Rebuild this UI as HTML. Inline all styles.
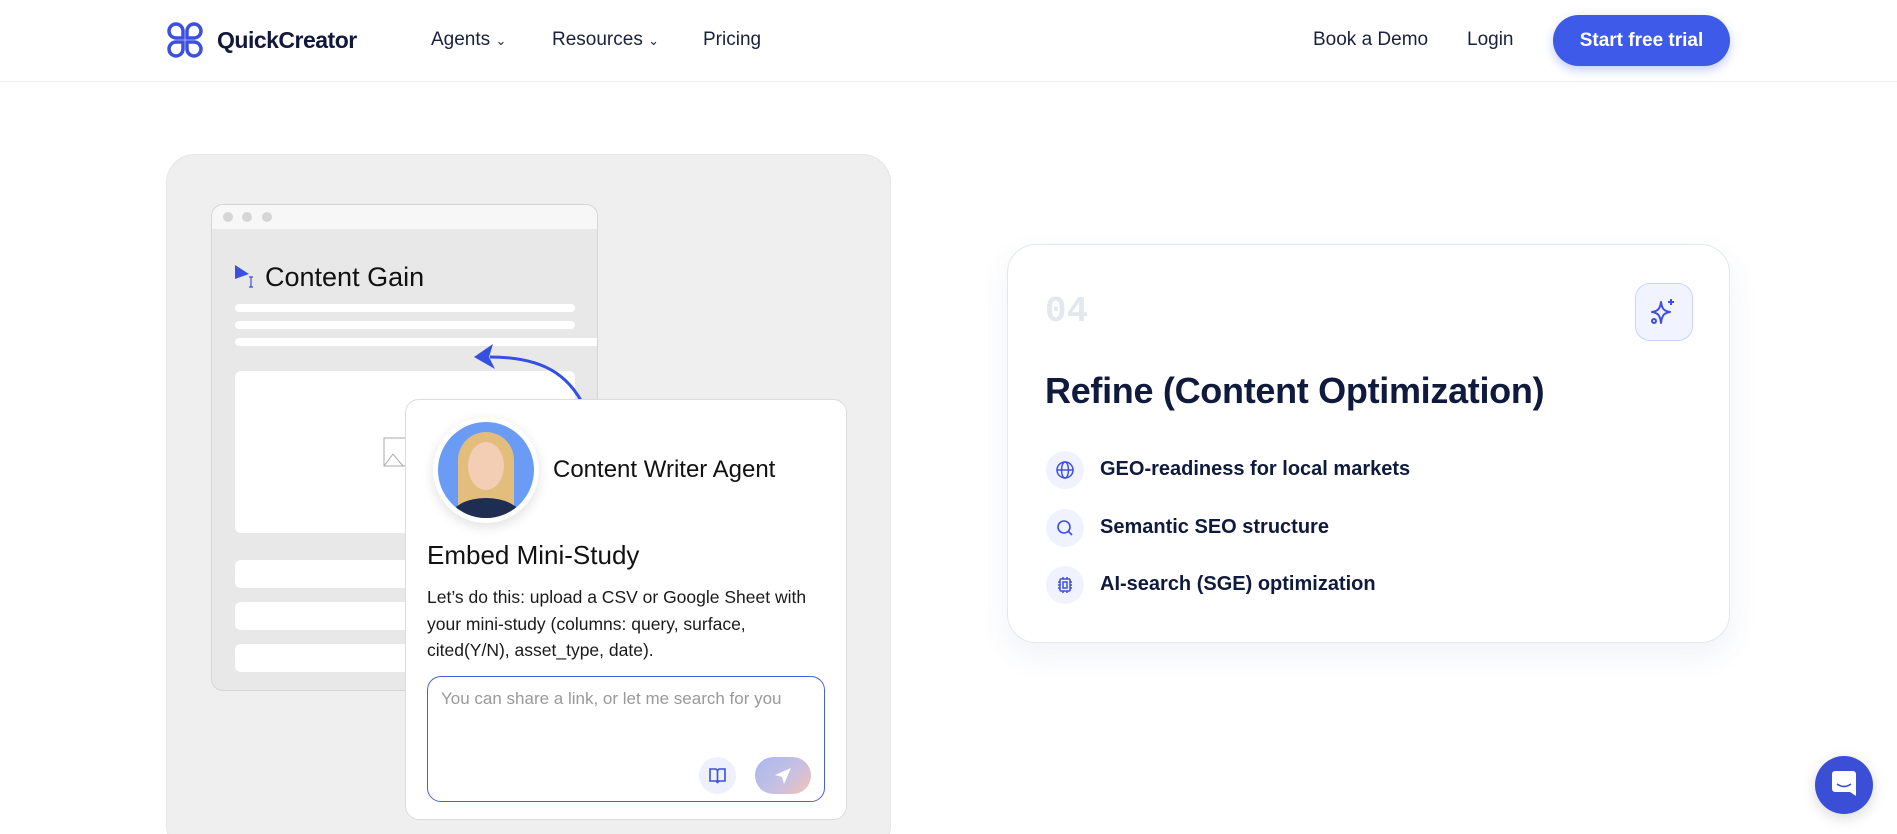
<!DOCTYPE html>
<html><head><meta charset="utf-8"><style>
*{margin:0;padding:0;box-sizing:border-box}
html,body{width:1897px;height:834px;overflow:hidden}
body{background:#fff;font-family:"Liberation Sans",sans-serif;color:#0f1a3d;position:relative}
.abs{position:absolute}
.hdr{left:0;top:0;width:1897px;height:82px;border-bottom:1px solid #f0f0f2;background:#fff}
.nav{font-size:19px;color:#1a2040;top:29px}
.btn{left:1553px;top:15px;width:177px;height:51px;border-radius:26px;background:#3d5ae8;color:#fff;font-weight:bold;font-size:19px;text-align:center;line-height:51px;box-shadow:0 4px 10px rgba(61,90,232,.3)}
.panel{left:166px;top:154px;width:725px;height:700px;background:#efefef;border-radius:29px;border:1px solid #e6e6e6}
.win{left:211px;top:204px;width:387px;height:487px;background:#e8e8e8;border:1px solid #d6d6d6;border-radius:12px;overflow:hidden}
.bar{left:0;top:0;width:100%;height:24px;background:#f7f7f7}
.dot{width:10px;height:10px;border-radius:50%;background:#d6d6d6;top:7px}
.ln{background:#fff;height:8px;border-radius:4px}
.card{left:405px;top:399px;width:442px;height:421px;background:#fff;border:1px solid #dcdcdc;border-radius:14px}
.rc{left:1007px;top:244px;width:723px;height:399px;background:#fff;border:1px solid #e5e7eb;border-radius:29px;box-shadow:0 12px 30px rgba(70,90,160,.08)}
.li{font-size:20px;font-weight:bold;color:#0f1a3d}
.ic{width:38px;height:38px;border-radius:50%;background:#f0f3fd}
</style></head><body>
<div class="abs hdr"></div>
<svg class="abs" style="left:166px;top:21px" width="38" height="38" viewBox="0 0 38 38" fill="none" stroke="#3d4fe0" stroke-width="3.5">
<path d="M17 17H10A7 7 0 1 1 17 10Z"/><path d="M21 17h7A7 7 0 1 0 21 10Z"/><path d="M17 21H10A7 7 0 1 0 17 28Z"/><path d="M21 21h7A7 7 0 1 1 21 28Z"/></svg>
<div class="abs" style="left:217px;top:27px;font-size:23px;font-weight:bold;color:#11183a;letter-spacing:-0.5px">QuickCreator</div>
<div class="abs nav" style="left:431px">Agents <span style="font-size:13px">&#8964;</span></div>
<div class="abs nav" style="left:552px">Resources <span style="font-size:13px">&#8964;</span></div>
<div class="abs nav" style="left:703px">Pricing</div>
<div class="abs nav" style="left:1313px">Book a Demo</div>
<div class="abs nav" style="left:1467px">Login</div>
<div class="abs btn">Start free trial</div>

<div class="abs panel"></div>
<div class="abs win">
 <div class="abs bar"></div>
 <div class="abs dot" style="left:11px"></div><div class="abs dot" style="left:30px"></div><div class="abs dot" style="left:50px"></div>
 <svg class="abs" style="left:23px;top:60px" width="22" height="24"><path d="M0 0L14 9L0 14Z" fill="#3d4fe0"/><path d="M16 12v10M14 12h4M14 22h4" stroke="#3d4fe0" stroke-width="1.2"/></svg>
 <div class="abs" style="left:53px;top:57px;font-size:27px;color:#111">Content Gain</div>
 <div class="abs ln" style="left:23px;top:99px;width:340px"></div>
 <div class="abs ln" style="left:23px;top:116px;width:340px"></div>
 <div class="abs ln" style="left:23px;top:133px;width:370px"></div>
 <div class="abs" style="left:23px;top:166px;width:340px;height:162px;background:#fff;border-radius:6px"></div>
 <svg class="abs" style="left:171px;top:232px" width="24" height="30"><rect x="1" y="1" width="22" height="28" fill="none" stroke="#aaa"/><path d="M1 29L10 17L20 29" fill="none" stroke="#aaa"/></svg>
 <div class="abs" style="left:23px;top:355px;width:340px;height:28px;background:#fff;border-radius:6px"></div>
 <div class="abs" style="left:23px;top:397px;width:340px;height:28px;background:#fff;border-radius:6px"></div>
 <div class="abs" style="left:23px;top:439px;width:340px;height:28px;background:#fff;border-radius:6px"></div>
</div>
<svg class="abs" style="left:460px;top:335px" width="140" height="80" fill="none"><path d="M127 77C112 45 90 22 30 22" stroke="#3550e0" stroke-width="3"/><path d="M14 22L33 9L29 22L35 34Z" fill="#3550e0"/></svg>

<div class="abs card">
 <div class="abs" style="left:27px;top:17px;width:106px;height:106px;border-radius:50%;background:#fff;box-shadow:0 4px 12px rgba(0,0,0,.12)"></div>
 <div class="abs" style="left:32px;top:22px;width:96px;height:96px;border-radius:50%;background:#6a9bf5;overflow:hidden">
  <div class="abs" style="left:20px;top:10px;width:56px;height:84px;border-radius:28px 28px 10px 10px;background:#e2bd7c"></div>
  <div class="abs" style="left:30px;top:20px;width:36px;height:48px;border-radius:50%;background:#f3cdb4"></div>
  <div class="abs" style="left:12px;top:76px;width:72px;height:40px;border-radius:50% 50% 0 0;background:#1f2d52"></div>
 </div>
 <div class="abs" style="left:147px;top:56px;font-size:24px;color:#111">Content Writer Agent</div>
 <div class="abs" style="left:21px;top:140px;font-size:26px;color:#111">Embed Mini-Study</div>
 <div class="abs" style="left:21px;top:184px;font-size:17.5px;line-height:26.5px;color:#1a1a1a;width:400px">Let’s do this: upload a CSV or Google Sheet with your mini-study (columns: query, surface, cited(Y/N), asset_type, date).</div>
 <div class="abs" style="left:21px;top:276px;width:398px;height:126px;border:1.5px solid #4a5fe0;border-radius:14px">
  <div class="abs" style="left:13px;top:12px;font-size:17px;color:#999">You can share a link, or let me search for you</div>
  <div class="abs" style="left:271px;top:80px;width:37px;height:37px;border-radius:50%;background:#eef1fb"></div>
  <svg class="abs" style="left:281px;top:90px" width="17" height="17" fill="none" stroke="#3d4fe0" stroke-width="1.6"><path d="M1 2h6l1.5 1.5L10 2h6v12h-6l-1.5 1.5L7 14H1Z M8.5 3.5v12"/></svg>
  <div class="abs" style="left:327px;top:80px;width:56px;height:37px;border-radius:19px;background:linear-gradient(135deg,#a9b8f0,#c9c0e0 60%,#f6c2b0)"></div>
  <svg class="abs" style="left:345px;top:89px" width="20" height="20"><path d="M18 2L2 9l7 2 2 7Z" fill="#fff"/></svg>
 </div>
</div>

<div class="abs rc">
 <div class="abs" style="left:37px;top:46px;font-family:'Liberation Mono',monospace;font-weight:bold;font-size:36px;color:#e3e8ef">04</div>
 <div class="abs" style="left:627px;top:38px;width:58px;height:58px;border-radius:15px;background:#f1f4ff;border:1px solid #c9d3fb"></div>
 <svg class="abs" style="left:641px;top:52px" width="30" height="30" fill="none" stroke="#3d4fe0" stroke-width="2" stroke-linejoin="round"><path d="M12 5C13 12 15 14 21 15 15 16 13 18 12 26 11 18 9 16 3 15 9 14 11 12 12 5Z"/><path d="M22 2v6M19 5h6"/><circle cx="5" cy="24" r="2"/></svg>
 <div class="abs" style="left:37px;top:125px;font-size:36px;font-weight:bold;color:#0f1a3d;letter-spacing:-0.3px">Refine (Content Optimization)</div>
 <div class="abs ic" style="left:38px;top:206px"></div>
 <svg class="abs" style="left:47px;top:215px" width="20" height="20" fill="none" stroke="#3d4fe0" stroke-width="1.5"><circle cx="10" cy="10" r="8"/><ellipse cx="10" cy="10" rx="3.5" ry="8"/><path d="M2 10h16"/></svg>
 <div class="abs li" style="left:92px;top:213px">GEO-readiness for local markets</div>
 <div class="abs ic" style="left:38px;top:264px"></div>
 <svg class="abs" style="left:47px;top:273px" width="20" height="20" fill="none" stroke="#3d4fe0" stroke-width="1.6"><circle cx="9" cy="9" r="6"/><path d="M13.5 13.5L17 17"/></svg>
 <div class="abs li" style="left:92px;top:271px">Semantic SEO structure</div>
 <div class="abs ic" style="left:38px;top:321px"></div>
 <svg class="abs" style="left:47px;top:330px" width="20" height="20" fill="none" stroke="#3d4fe0" stroke-width="1.5"><rect x="5" y="4" width="10" height="12" rx="1"/><rect x="8" y="7" width="4" height="6"/><path d="M3 7h2M3 10h2M3 13h2M15 7h2M15 10h2M15 13h2M8 2v2M12 2v2M8 16v2M12 16v2"/></svg>
 <div class="abs li" style="left:92px;top:328px">AI-search (SGE) optimization</div>
</div>

<div class="abs" style="left:1815px;top:756px;width:58px;height:58px;border-radius:50%;background:#3a4fd6;box-shadow:0 4px 14px rgba(0,0,0,.15)"></div>
<svg class="abs" style="left:1832px;top:771px" width="24" height="28"><path d="M3 0h18a3 3 0 0 1 3 3v22l-6-4H3a3 3 0 0 1-3-3V3a3 3 0 0 1 3-3Z" fill="#fff"/><path d="M5 13q7 5 14 0" stroke="#3a4fd6" stroke-width="1.6" fill="none"/></svg>
</body></html>
